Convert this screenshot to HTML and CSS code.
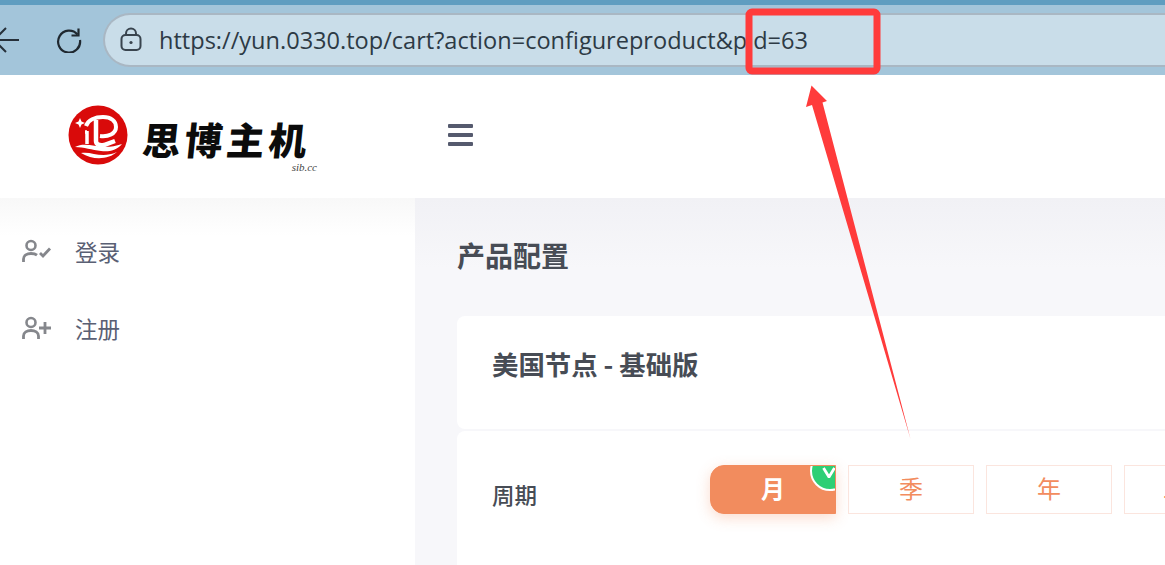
FILE: index.html
```html
<!DOCTYPE html>
<html lang="zh-CN">
<head>
    <meta charset="UTF-8">
    <meta name="viewport" content="width=device-width, initial-scale=1.0">
    <title>产品配置 - 思博主机</title>
    <link rel="stylesheet" href="styles.css">
</head>
<body>
    <!-- Browser toolbar -->
    <div class="toolbar">
        <svg class="back-icon" width="22" height="30" viewBox="0 0 22 30">
            <path d="M-6 15H19M6 3L-6 15L6 27" fill="none" stroke="#26303a" stroke-width="2"/>
        </svg>
        <svg class="reload-icon" width="26" height="26" viewBox="0 0 26 26">
            <path d="M21.5 7.5A11 11 0 1 0 24 13" fill="none" stroke="#1f2830" stroke-width="2.2"/>
            <path d="M22.5 1.5V8.5H15.5" fill="none" stroke="#1f2830" stroke-width="2.2"/>
        </svg>
        <div class="address-bar">
            <svg class="lock-icon" width="22" height="24" viewBox="0 0 22 24">
                <rect x="1.5" y="8" width="19" height="15" rx="4" fill="none" stroke="#39444e" stroke-width="2"/>
                <path d="M6 8V6.5A5 5 0 0 1 16 6.5V8" fill="none" stroke="#39444e" stroke-width="2"/>
                <circle cx="11" cy="15.5" r="1.6" fill="#39444e"/>
            </svg>
            <span class="url">https://yun.0330.top/cart?action=configureproduct&amp;pid=63</span>
        </div>
    </div>

    <!-- Site header -->
    <header>
        <div class="logo">
            <svg class="logo-mark" width="60" height="60" viewBox="0 0 60 60">
                <circle cx="30" cy="30" r="29.5" fill="#d90a0a"/>
                <path d="M12 13L13.5 16.5L17 18L13.5 19.5L12 23L10.5 19.5L7 18L10.5 16.5Z" fill="#fff"/>
                <path d="M18 21C20 15 27 12 35 12C43 12 48 16 48 22C48 29 40 32 32 31" fill="none" stroke="#fff" stroke-width="4"/>
                <path d="M28 15V36C28 39 31 41 36 40L47 36" fill="none" stroke="#fff" stroke-width="4.5"/>
                <path d="M19 27H17M19 26V39" fill="none" stroke="#fff" stroke-width="3.5"/>
                <path d="M7 42C20 35 32 47 54 39C48 46 40 47 33 46C24 45 16 42 7 42Z" fill="#fff"/>
                <path d="M13 48C24 46 33 54 49 47C41 54 26 56 13 48Z" fill="#fff"/>
            </svg>
            <div class="logo-text">
                <div class="logo-name">思博主机</div>
                <div class="logo-domain">sib.cc</div>
            </div>
        </div>
        <div class="menu-toggle">
            <span></span>
            <span></span>
            <span></span>
        </div>
    </header>

    <div class="layout">
        <!-- Sidebar -->
        <aside class="sidebar">
            <a class="side-link" href="#">
                <svg width="30" height="24" viewBox="0 0 30 24">
                    <circle cx="9" cy="6.5" r="4.5" fill="none" stroke="#85878c" stroke-width="2.6"/>
                    <path d="M1.5 23V20C1.5 16.5 5 14.5 9 14.5C11.5 14.5 13.5 15 15 16.2" fill="none" stroke="#85878c" stroke-width="2.8"/>
                    <path d="M18 14L21 17L28 9.5" fill="none" stroke="#85878c" stroke-width="2.8"/>
                </svg>
                <span>登录</span>
            </a>
            <a class="side-link" href="#">
                <svg width="30" height="24" viewBox="0 0 30 24">
                    <circle cx="9" cy="6.5" r="4.5" fill="none" stroke="#85878c" stroke-width="2.6"/>
                    <path d="M1.5 23V20C1.5 16.5 5 14.5 9 14.5C13 14.5 16.5 16.5 16.5 20V23" fill="none" stroke="#85878c" stroke-width="2.8"/>
                    <path d="M17 12H29M23 6V18" fill="none" stroke="#85878c" stroke-width="2.8"/>
                </svg>
                <span>注册</span>
            </a>
        </aside>

        <!-- Main Content -->
        <main class="content">
            <h1>产品配置</h1>
            <div class="card card-title">
                <h2>美国节点 - 基础版</h2>
            </div>
            <div class="card card-options">
                <div class="option-label">周期</div>
                <div class="cycle-list">
                    <div class="cycle active">月<span class="cycle-check"><svg width="14" height="11" viewBox="0 0 14 11"><path d="M1.5 1L7 10L12.5 1" fill="none" stroke="#fff" stroke-width="2.8"/></svg></span></div>
                    <div class="cycle">季</div>
                    <div class="cycle">年</div>
                    <div class="cycle">二年</div>
                </div>
            </div>
        </main>
    </div>

    <!-- Screenshot annotation -->
    <svg class="annotation" width="1165" height="565" viewBox="0 0 1165 565">
        <rect x="749" y="12" width="128" height="59" rx="3" fill="none" stroke="#ff3b3b" stroke-width="7"/>
        <polygon points="811.5,85.5 827,101 822.5,102.5 910.5,439 812,105 806,107" fill="#ff3b3b"/>
    </svg>
</body>
</html>
```

FILE: styles.css
```css
/* General Styles */
html, body {
    height: 100%;
}

body {
    position: relative;
    width: 1165px;
    height: 565px;
    margin: 0;
    overflow: hidden;
    display: flex;
    flex-direction: column;
    background-color: #fff;
    color: #474c55;
    font-family: "Noto Sans CJK SC", sans-serif;
}

/* Browser toolbar */
.toolbar {
    display: flex;
    align-items: center;
    flex-shrink: 0;
    height: 70px;
    border-top: 5px solid #5f9dc0;
    background-color: #a3c5da;
}

.back-icon {
    flex-shrink: 0;
}

.reload-icon {
    flex-shrink: 0;
    margin-left: 34px;
    margin-right: 21px;
}

/* Runs off the right of the window, so only the left end is rounded */
.address-bar {
    display: flex;
    align-items: center;
    flex: 1;
    min-width: 0;
    height: 50px;
    padding-left: 15px;
    border: 2px solid #a9b7c3;
    border-right: none;
    border-radius: 27px 0 0 27px;
    background-color: #c9dde9;
}

.lock-icon {
    flex-shrink: 0;
    margin-right: 17px;
    margin-top: -3px;
}

.url {
    font-family: "Open Sans", sans-serif;
    font-size: 23.55px;
    color: #2d3a45;
    white-space: nowrap;
}

/* Site header */
header {
    display: flex;
    align-items: center;
    flex-shrink: 0;
    height: 123px;
    padding-left: 68px;
    background-color: #fff;
}

.logo {
    display: flex;
    align-items: center;
    width: 347px;
}

.logo-mark {
    flex-shrink: 0;
    margin-top: -4px;
}

.logo-text {
    width: 174px;
    margin-left: 15px;
    margin-top: 21px;
}

.logo-name {
    font-size: 38px;
    font-weight: 900;
    line-height: 36px;
    letter-spacing: 4px;
    color: #0b0b0b;
    white-space: nowrap;
    transform: skewX(-6deg);
}

.logo-domain {
    margin-top: 4px;
    font-family: "Liberation Serif", serif;
    font-size: 11px;
    font-style: italic;
    line-height: 12px;
    text-align: right;
    color: #444;
}

.menu-toggle {
    display: flex;
    flex-direction: column;
    gap: 5px;
    width: 25px;
    margin-left: 33px;
    margin-top: -4px;
}

.menu-toggle span {
    height: 4px;
    border-radius: 1px;
    background-color: #555a6e;
}

/* Page body */
.layout {
    display: flex;
    flex: 1;
    min-height: 0;
}

.sidebar {
    flex-shrink: 0;
    width: 415px;
    padding-top: 14px;
    box-sizing: border-box;
    background: linear-gradient(#f8f8f8, #fff 38px);
}

.side-link {
    display: flex;
    align-items: center;
    gap: 23px;
    height: 77px;
    padding-left: 22px;
    font-size: 22.5px;
    color: #5a6074;
    text-decoration: none;
}

.content {
    flex: 1;
    min-width: 0;
    padding: 35px 0 0 42px;
    background: linear-gradient(#f1f1f5, #f7f7fa 70px);
}

h1 {
    margin: 0 0 39px;
    font-size: 28px;
    font-weight: 700;
    line-height: 44px;
    color: #474c55;
}

.card {
    background-color: #fff;
    border-radius: 8px 0 0 8px;
}

.card-title {
    display: flex;
    align-items: center;
    height: 113px;
    margin-bottom: 2px;
    padding-left: 35px;
    padding-bottom: 18px;
    box-sizing: border-box;
}

h2 {
    margin: 0;
    font-size: 26.4px;
    font-weight: 700;
    color: #474c55;
}

.card-options {
    display: flex;
    height: 134px;
    box-sizing: border-box;
    padding: 34px 0 0 35px;
    border-radius: 8px 0 0 0;
    overflow: hidden;
}

.option-label {
    width: 218px;
    flex-shrink: 0;
    font-size: 22.5px;
    font-weight: 500;
    line-height: 58px;
    color: #474c55;
}

.cycle-list {
    display: flex;
    gap: 12px;
}

.cycle {
    position: relative;
    flex-shrink: 0;
    width: 126px;
    height: 49px;
    box-sizing: border-box;
    border: 1px solid #fbe5de;
    font-size: 24px;
    line-height: 44px;
    text-align: center;
    color: #f28c5e;
}

.cycle.active {
    overflow: hidden;
    border-color: #f28c5e;
    border-radius: 14px 0 0 14px;
    background-color: #f28c5e;
    box-shadow: 0 4px 14px rgba(242, 140, 94, 0.3);
    font-weight: 700;
    color: #fff;
}

.cycle-check {
    position: absolute;
    top: -15px;
    right: -15px;
    display: flex;
    align-items: center;
    justify-content: center;
    width: 36px;
    height: 36px;
    border: 2px solid #fff;
    border-radius: 50%;
    background-color: #2ecf75;
}

.cycle-check svg {
    margin-top: 2px;
    margin-right: 2px;
}

/* Red marker drawn on top of the screenshot */
.annotation {
    position: absolute;
    top: 0;
    left: 0;
    pointer-events: none;
}
```
